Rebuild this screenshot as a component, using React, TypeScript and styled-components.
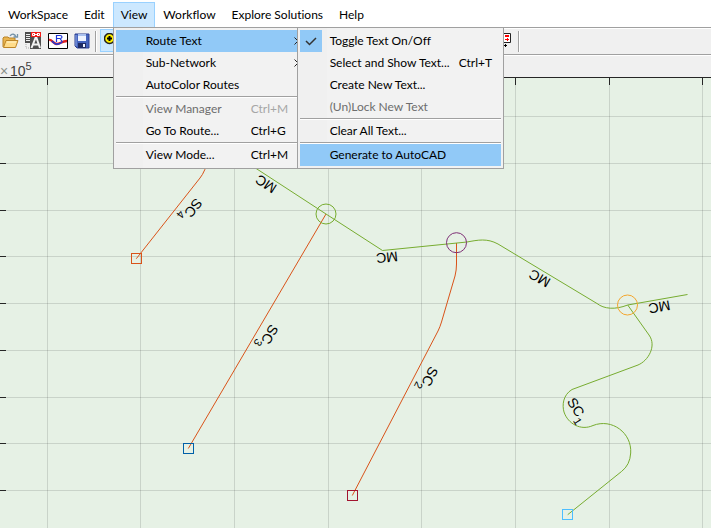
import React from "react";
import styled, { createGlobalStyle } from "styled-components";

const GlobalStyle = createGlobalStyle`
  * { box-sizing: border-box; }
  body {
    margin: 0;
    background: #f0f0f0;
    color: #000;
    font-family: Lato, "Open Sans", sans-serif;
    font-size: 12px;
    font-variant-ligatures: none;
  }
`;

const Window = styled.div`
  display: flex;
  flex-direction: column;
  min-height: 100vh;
`;

const MenuBar = styled.nav`
  display: flex;
  height: 28px;
  padding-top: 2px;
  background: #fff;
  border-bottom: 1px solid #a0a0a0;
`;

const MenuSlot = styled.div`
  position: relative;
`;

const MenuTitle = styled.button<{ $open?: boolean }>`
  height: 26px;
  padding: 0 7px;
  border: 1px solid ${(p) => (p.$open ? "#99d1ff" : "transparent")};
  background: ${(p) => (p.$open ? "#cce8ff" : "transparent")};
  color: inherit;
  font: inherit;
  font-variant-ligatures: none;
  line-height: 24px;
  white-space: nowrap;
`;

const Popup = styled.ul<{ $width: number; $sub?: boolean }>`
  position: absolute;
  z-index: ${(p) => (p.$sub ? 2 : 1)};
  top: ${(p) => (p.$sub ? "-3px" : "25px")};
  left: ${(p) => (p.$sub ? "181px" : "0")};
  width: ${(p) => p.$width}px;
  margin: 0;
  padding: 2px;
  list-style: none;
  border: 1px solid #a0a0a0;
  background: linear-gradient(90deg, #f0f0f0 29px, #f2f2f2 29px);
`;

const PopupRow = styled.li`
  position: relative;
`;

const Divider = styled.li`
  height: 2px;
  border-top: 1px solid #a0a0a0;
  background: #fff;
`;

const Command = styled.button<{ $active?: boolean; $keyColumn: number }>`
  display: grid;
  grid-template-columns: 30px 1fr ${(p) => p.$keyColumn}px;
  align-items: center;
  width: 100%;
  height: 22px;
  padding: 0;
  border: 0;
  background: ${(p) => (p.$active ? "#91c9f7" : "transparent")};
  color: #000;
  font: inherit;
  font-variant-ligatures: none;
  line-height: 22px;
  text-align: left;
  white-space: nowrap;

  &:disabled {
    color: #6d6d6d;
  }
  &:disabled kbd {
    color: #a6a6a6;
  }
`;

const Shortcut = styled.kbd`
  font: inherit;
`;

const CheckTile = styled.span`
  display: flex;
  align-items: center;
  justify-content: center;
  width: 22px;
  height: 22px;
  background: #91c9f7;
`;

const SubmenuArrow = styled.svg`
  width: 5px;
  height: 8px;
  margin-left: 43px;
`;

const Toolbar = styled.div`
  display: flex;
  align-items: flex-start;
  height: 27px;
  border-top: 1px solid #fff;
  border-bottom: 1px solid #a0a0a0;
  overflow: hidden;
`;

const ToolGroup = styled.div<{ $end?: boolean }>`
  display: flex;
  align-items: center;
  flex: none;
  margin-left: ${(p) => (p.$end ? 370 : -1)}px;
`;

const ToolButton = styled.button<{ $active?: boolean; $wide?: boolean }>`
  display: flex;
  align-items: center;
  justify-content: center;
  width: ${(p) => (p.$wide ? 25 : 23)}px;
  height: 23px;
  padding: 0;
  border: 1px solid ${(p) => (p.$active ? "#99d1ff" : "transparent")};
  background: ${(p) => (p.$active ? "#cce8ff" : "transparent")};
`;

const ToolDivider = styled.span`
  width: 2px;
  height: 21px;
  margin: 2px 3px 0 2px;
  border-left: 1px solid #a0a0a0;
  border-right: 1px solid #fff;
`;

const AxisStrip = styled.div`
  height: 22px;
  border-top: 1px solid #fff;
  font-family: "Liberation Sans", Arial, sans-serif;
  font-size: 14px;
  line-height: 30px;
  color: #404040;
`;

const Times = styled.span`
  display: inline-block;
  width: 10px;
  color: #8a8f88;
`;

const Exponent = styled.sup`
  font-size: 11px;
  line-height: 0;
  vertical-align: 6px;
`;

const Plot = styled.svg`
  display: block;
  flex: 1;
  width: 100%;
  min-height: 451px;
  background: #e6f1e5;
  font-family: "Liberation Sans", Arial, sans-serif;
`;

const OpenIcon = () => (
  <svg width="17" height="16" viewBox="0 0 17 16">
    <path d="M1 14V5l1-1h4l1 1h6v4" fill="#e9b44f" stroke="#b98227" />
    <path d="M1.500 14.500 4 7.500h12l-2.500 7z" fill="#ffdc8a" stroke="#bd8528" />
    <path d="M5 9h9" stroke="#fff3cb" />
    <path d="M8 3c2-3 5-2 6 1M11.500 4h4V1" fill="none" stroke="#7593a8" strokeWidth="1.300" />
  </svg>
);

const TextDatabaseIcon = () => (
  <svg width="17" height="17" viewBox="0 0 17 17">
    <path d="M0 0h6v11H0z" fill="#4d4d4d" />
    <path d="M1 2.500h4M1 4.500h4M1 6.500h4M1 8.500h4" stroke="#eee" />
    <path d="M5 5h11v12H5z" fill="#505050" />
    <path d="M6.500 16 10.500 6h1l3.500 10M8 12.500h6" fill="none" stroke="#f4f4f4" strokeWidth="2" />
    <path d="M6 0h10v5H6z" fill="#f21c18" />
    <path d="M10 1.500H7.500v2H10M12 1.500h2.500v2H12M9 2.500h4" fill="none" stroke="#fff" />
    <path d="M1 12v4h3" fill="none" stroke="#aaa" strokeDasharray="1 1" />
  </svg>
);

const RouteIcon = () => (
  <svg width="20" height="16" viewBox="0 0 20 16">
    <path d="M.500.500h19v15H.500z" fill="#fff" stroke="#000" />
    <path d="M1 7c3-1 4 4 8 4 3 0 5-3 10-3" fill="none" stroke="#e02020" strokeWidth="2.400" />
    <path d="M4 8c3 4 7 4 10 1" fill="none" stroke="#2338d4" strokeWidth="1.600" />
    <path d="M8.500 9V2.500h3.500q2 0 2 1.500t-2 1.500H8.500M12 5.500 14.500 9" fill="none" stroke="#1c35d8" strokeWidth="1.200" />
  </svg>
);

const SaveIcon = () => (
  <svg width="16" height="16" viewBox="0 0 16 16">
    <path d="M1 1h14v14H3l-2-2z" fill="#4463bd" stroke="#2c3e91" />
    <path d="M4 1h8v7H4z" fill="#eef3ff" />
    <path d="M4 1h8v2H4z" fill="#a9c0ee" />
    <path d="M4 10h8v5H4z" fill="#1f2b64" />
    <path d="M9 11h2v3H9z" fill="#f0f4ff" />
    <path d="M2 2v11" stroke="#8fa8e6" />
  </svg>
);

const ZoomInIcon = () => (
  <svg width="16" height="16" viewBox="0 0 16 16">
    <path d="m9 9 5 5" stroke="#000" strokeWidth="2" />
    <circle cx="5.500" cy="5.500" r="5" fill="#fff000" stroke="#222" strokeWidth="1.500" />
    <path d="M3 5.500h5M5.500 3v5" stroke="#000" strokeWidth="2" />
  </svg>
);

const LegendIcon = () => (
  <svg width="15" height="16" viewBox="0 0 15 16">
    <path d="M6.500.500h7v9h-7z" fill="#fff" stroke="#222" />
    <path d="M8 3h4" stroke="#f00" strokeWidth="2" />
    <path d="M8 6.500h4M10.500 5v3" stroke="#f00" />
    <path d="M5 12.500h5M8.500 11v3" stroke="#000" />
  </svg>
);

const Arrow = () => (
  <SubmenuArrow viewBox="0 0 5 8" aria-hidden="true">
    <path d="m.500.500 3.500 3.500-3.500 3.500" fill="none" stroke="#222" />
  </SubmenuArrow>
);

const Tick = () => (
  <CheckTile>
    <svg width="12" height="9" viewBox="0 0 12 9">
      <path d="m1 4 3.500 3.500L11 1" fill="none" stroke="#333" strokeWidth="1.500" />
    </svg>
  </CheckTile>
);

interface Entry {
  label: string;
  keys?: string;
  disabled?: boolean;
  active?: boolean;
  checked?: boolean;
  divided?: boolean;
  items?: Entry[];
  arrow?: boolean;
}

const routeTextItems: Entry[] = [
  { label: "Toggle Text On/Off", checked: true },
  { label: "Select and Show Text...", keys: "Ctrl+T" },
  { label: "Create New Text..." },
  { label: "(Un)Lock New Text", disabled: true },
  { label: "Clear All Text...", divided: true },
  { label: "Generate to AutoCAD", divided: true, active: true },
];

const viewItems: Entry[] = [
  { label: "Route Text", active: true, arrow: true, items: routeTextItems },
  { label: "Sub-Network", arrow: true },
  { label: "AutoColor Routes" },
  { label: "View Manager", keys: "Ctrl+M", disabled: true, divided: true },
  { label: "Go To Route...", keys: "Ctrl+G" },
  { label: "View Mode...", keys: "Ctrl+M", divided: true },
];

function MenuPopup({ items, sub }: { items: Entry[]; sub?: boolean }) {
  return (
    <Popup $width={sub ? 207 : 190} $sub={sub}>
      {items.map((item) => (
        <React.Fragment key={item.label}>
          {item.divided && <Divider />}
          <PopupRow>
            <Command $active={item.active} $keyColumn={sub ? 42 : 49} disabled={item.disabled}>
              <span>{item.checked && <Tick />}</span>
              <span>{item.label}</span>
              {item.arrow ? <Arrow /> : <Shortcut>{item.keys}</Shortcut>}
            </Command>
            {item.items && <MenuPopup items={item.items} sub />}
          </PopupRow>
        </React.Fragment>
      ))}
    </Popup>
  );
}

const titles = ["WorkSpace", "Edit", "View", "Workflow", "Explore Solutions", "Help"];
const columns = [47, 140, 234, 328, 421, 515, 609, 702];
const rows = [39, 86, 133, 179, 226, 273, 320, 366, 413];

const orange = "#d95319";
const green = "#77ac30";

const routes = [
  { d: "M209 80Q205 95 200 101L136.300 181.700", color: orange },
  { d: "M326 137 188.300 371.500", color: orange },
  { d: "M456.500 166V187Q456.500 193 455 199L441.500 245Q440 250 438 254L352.300 418.500", color: orange },
  { d: "M240 81 326 137 382.500 173.500 467 165C478 163 487 161 498 167L597 226.500C604 232 615 233 627.700 228L687.500 217.500", color: green },
  { d: "M627.700 228 649 258C657 269 648 284 638 288L572 312.500C563 318 562 328 564 335C568 347 581 354 593 348.500C612 341 632 356 630.700 376Q630 388 621.500 394.500L567.700 437.700", color: green },
];

const nodes = [
  { x: 326, y: 137, color: green },
  { x: 456.500, y: 165.700, color: "#7e2f75" },
  { x: 627.500, y: 228, color: "#f4a62e" },
];

const ends = [
  { x: 131.500, y: 176.500, color: orange },
  { x: 183.500, y: 366.500, color: "#0060a8" },
  { x: 347.500, y: 413.500, color: "#a2142f" },
  { x: 562.500, y: 432.500, color: "#4dbeff" },
];

const labels = [
  { x: 266, y: 107, angle: 213, text: "MC" },
  { x: 387, y: 180.500, angle: 174, text: "MC" },
  { x: 539.500, y: 201.500, angle: 210, text: "MC" },
  { x: 659.500, y: 230, angle: 170, text: "MC" },
  { x: 193.500, y: 131, angle: 128, text: "SC", sub: "4" },
  { x: 270, y: 257.500, angle: 120, text: "SC", sub: "3" },
  { x: 430, y: 299.500, angle: 117, text: "SC", sub: "2" },
  { x: 576, y: 330, angle: 58, text: "SC", sub: "1" },
];

function RoutePlot() {
  return (
    <Plot role="img" aria-label="Route network">
      <g stroke="#262626" strokeOpacity="0.15" shapeRendering="crispEdges">
        {columns.map((x) => <line key={x} x1={x + 0.5} x2={x + 0.5} y1="0" y2="100%" />)}
        {rows.map((y) => <line key={y} x1="0" x2="100%" y1={y + 0.5} y2={y + 0.5} />)}
      </g>
      <g stroke="#262626" shapeRendering="crispEdges">
        <line x1="0" x2="100%" y1="0.5" y2="0.5" />
        {columns.map((x) => <line key={x} x1={x + 0.5} x2={x + 0.5} y1="0" y2="8" />)}
        {rows.map((y) => <line key={y} x1="0" x2="6" y1={y + 0.5} y2={y + 0.5} />)}
      </g>
      <g fill="none">
        {routes.map((r) => <path key={r.d} d={r.d} stroke={r.color} />)}
        {nodes.map((n) => <circle key={n.x} cx={n.x} cy={n.y} r="10" stroke={n.color} />)}
        {ends.map((e) => <rect key={e.x} x={e.x} y={e.y} width="10" height="10" stroke={e.color} />)}
      </g>
      <g fontSize="14" textAnchor="middle">
        {labels.map((l) => (
          <g key={l.x} transform={`translate(${l.x} ${l.y}) rotate(${l.angle})`}>
            <text y="5">{l.text}</text>
            {l.sub && <text x="13" y="10" fontSize="11">{l.sub}</text>}
          </g>
        ))}
      </g>
    </Plot>
  );
}

export default function App() {
  return (
    <Window>
      <GlobalStyle />
      <MenuBar>
        {titles.map((title) => (
          <MenuSlot key={title}>
            <MenuTitle $open={title === "View"}>{title}</MenuTitle>
            {title === "View" && <MenuPopup items={viewItems} />}
          </MenuSlot>
        ))}
      </MenuBar>
      <Toolbar>
        <ToolGroup>
          <ToolButton aria-label="Open"><OpenIcon /></ToolButton>
          <ToolButton aria-label="Text database"><TextDatabaseIcon /></ToolButton>
          <ToolButton $wide aria-label="Routes"><RouteIcon /></ToolButton>
          <ToolButton aria-label="Save"><SaveIcon /></ToolButton>
          <ToolDivider />
          <ToolButton $active aria-label="Zoom in"><ZoomInIcon /></ToolButton>
        </ToolGroup>
        <ToolGroup $end>
          <ToolButton aria-label="Legend"><LegendIcon /></ToolButton>
          <ToolDivider />
        </ToolGroup>
      </Toolbar>
      <AxisStrip>
        <Times>×</Times>10<Exponent>5</Exponent>
      </AxisStrip>
      <RoutePlot />
    </Window>
  );
}
